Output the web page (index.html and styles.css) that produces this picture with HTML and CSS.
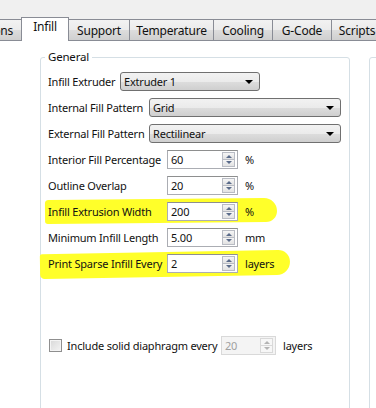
FILE: index.html
```html
<!DOCTYPE html>
<html lang="en">
<head>
    <meta charset="UTF-8">
    <title>Infill settings</title>
    <link rel="stylesheet" href="styles.css">
</head>
<body>
<div class="window">
    <div class="top-strip"></div>

    <!-- Tab bar -->
    <div class="tabs">
        <div class="tab first">Options</div>
        <div class="tab active">Infill</div>
        <div class="tab">Support</div>
        <div class="tab">Temperature</div>
        <div class="tab">Cooling</div>
        <div class="tab">G-Code</div>
        <div class="tab last">Scripts</div>
    </div>

    <div class="pane">
        <div class="groupbox">
            <div class="group-title">General</div>

            <div class="row">
                <span class="label w-extruder">Infill Extruder</span>
                <div class="combo w-short"><span>Extruder 1</span><i class="arrow"></i></div>
            </div>
            <div class="row">
                <span class="label w-pattern">Internal Fill Pattern</span>
                <div class="combo w-long"><span>Grid</span><i class="arrow"></i></div>
            </div>
            <div class="row">
                <span class="label w-pattern">External Fill Pattern</span>
                <div class="combo w-long"><span>Rectilinear</span><i class="arrow"></i></div>
            </div>

            <div class="row">
                <span class="label w-spin">Interior Fill Percentage</span>
                <div class="spin"><span>60</span><div class="spin-btns"><b class="up"></b><b class="down"></b></div></div>
                <span class="unit">%</span>
            </div>
            <div class="row">
                <span class="label w-spin">Outline Overlap</span>
                <div class="spin"><span>20</span><div class="spin-btns"><b class="up"></b><b class="down"></b></div></div>
                <span class="unit">%</span>
            </div>
            <div class="row marked">
                <span class="marker marker-a"></span>
                <span class="label w-spin">Infill Extrusion Width</span>
                <div class="spin"><span>200</span><div class="spin-btns"><b class="up"></b><b class="down"></b></div></div>
                <span class="unit">%</span>
            </div>
            <div class="row">
                <span class="label w-spin">Minimum Infill Length</span>
                <div class="spin"><span>5.00</span><div class="spin-btns"><b class="up"></b><b class="down"></b></div></div>
                <span class="unit">mm</span>
            </div>
            <div class="row marked">
                <span class="marker marker-b"></span>
                <span class="label w-spin">Print Sparse Infill Every</span>
                <div class="spin"><span>2</span><div class="spin-btns"><b class="up"></b><b class="down"></b></div></div>
                <span class="unit">layers</span>
            </div>

            <div class="row check-row">
                <span class="checkbox"></span>
                <span class="label w-check">Include solid diaphragm every</span>
                <div class="spin small disabled"><span>20</span><div class="spin-btns"><b class="up"></b><b class="down"></b></div></div>
                <span class="unit">layers</span>
            </div>
        </div>
        <div class="groupbox side"></div>
    </div>
</div>
</body>
</html>
```

FILE: styles.css
```css
body {
    margin: 0;
    background: #fff;
    font-family: "Noto Sans", "Open Sans", sans-serif;
    font-size: 11px;
    letter-spacing: -0.2px;
    color: #111;
    overflow: hidden;
}
.window {
    width: 376px;
    height: 408px;
    overflow: hidden;
}
.top-strip {
    height: 17px;
    background: #f0f0f0;
}

/* tabs */
.tabs {
    display: flex;
    align-items: flex-end;
    height: 23px;
    background: #f0f0f0;
    border-bottom: 1px solid #898c95;
}
.tab {
    flex: none;
    height: 20px;
    line-height: 21px;
    font-size: 12px;
    text-align: center;
    border: 1px solid #898c95;
    border-bottom: none;
    border-right: none;
    background: linear-gradient(#f2f2f2, #ebebeb 50%, #dddddd 51%, #cfcfcf);
}
.tab.first { width: 59px; margin-left: -39px; }
.tab.active {
    width: 46px;
    height: 23px;
    line-height: 17px;
    margin-bottom: -1px;
    background: #fff;
    border-right: 1px solid #898c95;
    position: relative;
    z-index: 1;
}
.tab:nth-child(3) { width: 60px; border-left: none; }
.tab:nth-child(4) { width: 83px; }
.tab:nth-child(5) { width: 58px; }
.tab:nth-child(6) { width: 58px; }
.tab.last { width: 50px; padding-right: 10px; }

/* pane */
.pane {
    display: flex;
    padding: 16px 0 0 40px;
}
.groupbox {
    flex: none;
    width: 301px;
    height: 400px;
    border: 1px solid #d5dfe5;
    border-radius: 3px;
    padding: 14px 0 0 7px;
    display: flex;
    flex-direction: column;
    gap: 7px;
    position: relative;
}
.groupbox.side {
    width: 60px;
    margin-left: 19px;
    padding: 0;
}
.group-title {
    position: absolute;
    top: -9px;
    left: 4px;
    padding: 0 3px;
    background: #fff;
    line-height: 16px;
    font-size: 11.5px;
}

.row {
    display: flex;
    align-items: center;
    height: 19px;
    position: relative;
}
.label {
    flex: none;
    white-space: nowrap;
    position: relative;
}
.w-extruder { width: 72px; }
.w-pattern { width: 101px; }
.w-spin { width: 119px; }
.w-check { width: 154px; }

/* combo boxes */
.combo {
    flex: none;
    box-sizing: border-box;
    height: 19px;
    border: 1px solid #707070;
    border-radius: 3px;
    background: linear-gradient(#f2f2f2, #ebebeb 50%, #dddddd 51%, #cfcfcf);
    display: flex;
    align-items: center;
    justify-content: space-between;
    padding: 0 6px 0 3px;
}
.w-short { width: 140px; }
.w-long { width: 192px; }
.arrow {
    width: 0;
    height: 0;
    border-left: 4px solid transparent;
    border-right: 4px solid transparent;
    border-top: 4px solid #000;
}

/* spin boxes */
.spin {
    flex: none;
    box-sizing: border-box;
    width: 71px;
    height: 19px;
    border: 1px solid #abadb3;
    border-top-color: #8e8f8f;
    background: #fff;
    display: flex;
    align-items: center;
    justify-content: space-between;
    padding: 0 2px 0 3px;
    position: relative;
}
.spin.small { width: 55px; }
.spin-btns {
    display: flex;
    flex-direction: column;
    width: 13px;
    height: 15px;
}
.spin-btns b {
    flex: 1;
    border: 1px solid #b9bcc4;
    background: linear-gradient(#f6f6f6, #e2e2e2);
    position: relative;
}
.spin-btns b + b { border-top: none; }
.spin-btns b::after {
    content: "";
    position: absolute;
    left: 3px;
    top: 2px;
    border-left: 3px solid transparent;
    border-right: 3px solid transparent;
}
.spin-btns .up::after { border-bottom: 3px solid #5a6b8a; }
.spin-btns .down::after { border-top: 3px solid #5a6b8a; top: 1px; }
.spin.disabled {
    background: #f4f4f4;
    border-color: #d9d9d9;
    color: #a0a0a0;
}
.spin.disabled .spin-btns b { border-color: #d9d9d9; background: #f7f7f7; }
.spin.disabled .spin-btns b::after { border-bottom-color: #b4b4b4; border-top-color: #b4b4b4; }

.unit {
    margin-left: 7px;
    position: relative;
}

/* yellow marker highlight */
.marker {
    position: absolute;
    background: #ffff2a;
}
.marker-a {
    left: -3px;
    top: -3px;
    width: 232px;
    height: 24px;
    border-radius: 4px 14px 12px 3px;
    transform: rotate(-0.5deg);
}
.marker-b {
    left: -8px;
    top: -2px;
    width: 250px;
    height: 25px;
    border-radius: 3px 16px 18px 6px;
    transform: rotate(-1deg);
}

/* checkbox row */
.check-row {
    margin-top: 56px;
}
.checkbox {
    flex: none;
    box-sizing: border-box;
    width: 13px;
    height: 13px;
    margin: 0 5px 0 1px;
    border: 1px solid #8f8f8f;
    background: linear-gradient(135deg, #d8d8d8, #f4f4f4);
    box-shadow: inset 0 0 0 1px #f4f4f4;
}
```
